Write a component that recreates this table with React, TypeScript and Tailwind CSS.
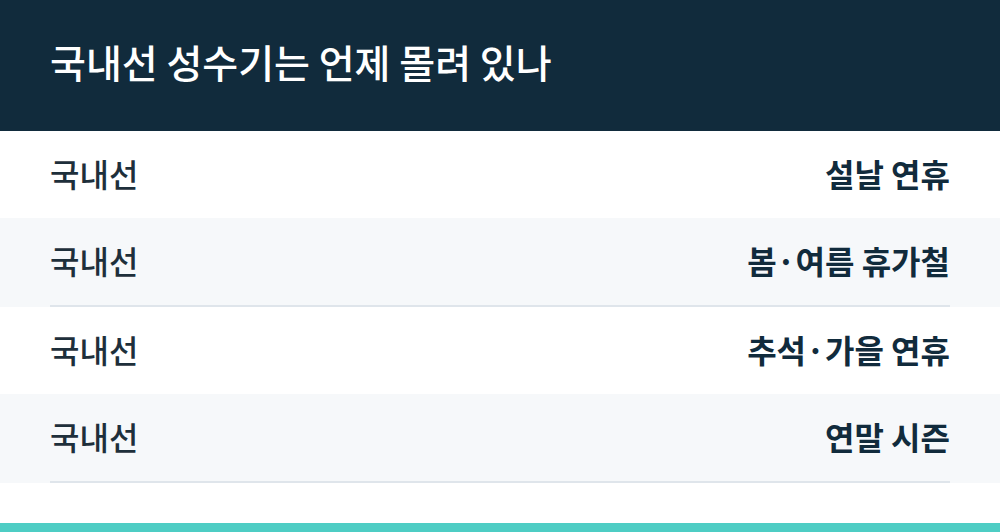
const rows = [
  { left: '국내선', right: '설날 연휴', shaded: false },
  { left: '국내선', right: '봄·여름 휴가철', shaded: true },
  { left: '국내선', right: '추석·가을 연휴', shaded: false },
  { left: '국내선', right: '연말 시즌', shaded: true },
]

export default function App() {
  return (
    <div
      className="w-[1000px] h-[532px] bg-white flex flex-col"
      style={{ fontFamily: '"Noto Sans CJK KR", "Noto Sans", sans-serif' }}
    >
      <header className="h-[131px] bg-[#112b3c] flex items-center px-[50px]">
        <h1 className="text-[39px] leading-none font-medium text-white pb-[8px]">
          국내선 성수기는 언제 몰려 있나
        </h1>
      </header>
      <div className="flex flex-col">
        {rows.map((row, i) => (
          <div key={i} className={row.shaded ? 'bg-[#f6f8fa]' : 'bg-white'}>
            <div
              className={
                'mx-[50px] flex items-center justify-between text-[32px] leading-none pb-[4px] ' +
                (row.shaded ? 'h-[89px] border-b-2 border-[#dfe5eb]' : 'h-[87px]')
              }
            >
              <span className="font-medium text-[#1e2f3b]">{row.left}</span>
              <span className="font-semibold text-[#112b3c]">{row.right}</span>
            </div>
          </div>
        ))}
      </div>
      <div className="flex-1" />
      <div className="h-[9px] bg-[#4ecdc4]" />
    </div>
  )
}
